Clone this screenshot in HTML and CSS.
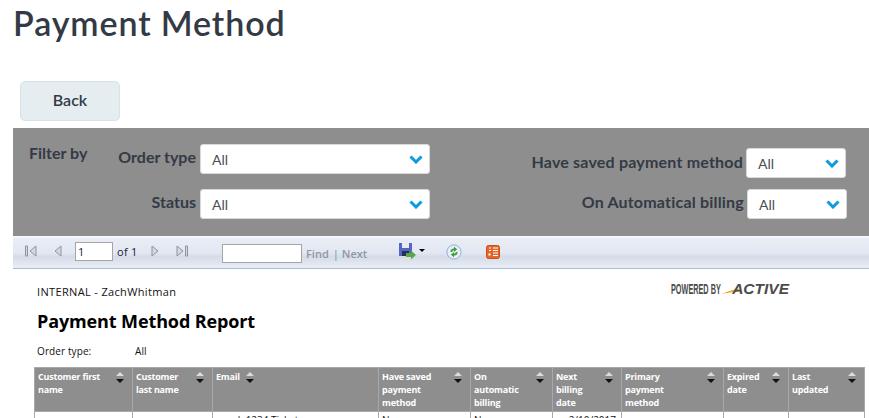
FILE: index.html
```html
<!DOCTYPE html>
<html lang="en">
<head>
<meta charset="utf-8">
<title>Payment Method</title>
<link rel="stylesheet" href="styles.css">
</head>
<body>
<div class="page">
  <h1 class="title">Payment Method</h1>
  <div class="actions"><button class="back">Back</button></div>
  <section class="filters">
    <div class="filter-by">Filter by</div>
    <div class="filter-left">
      <label class="field"><span class="lbl">Order type</span><span class="select wide">All<svg class="chev" viewBox="0 0 14 9"><path d="M1.5 1.5 7 7l5.5-5.5" fill="none" stroke="#0a9be0" stroke-width="3"/></svg></span></label>
      <label class="field"><span class="lbl">Status</span><span class="select wide">All<svg class="chev" viewBox="0 0 14 9"><path d="M1.5 1.5 7 7l5.5-5.5" fill="none" stroke="#0a9be0" stroke-width="3"/></svg></span></label>
    </div>
    <div class="filter-right">
      <label class="field"><span class="lbl">Have saved payment method</span><span class="select narrow">All<svg class="chev" viewBox="0 0 14 9"><path d="M1.5 1.5 7 7l5.5-5.5" fill="none" stroke="#0a9be0" stroke-width="3"/></svg></span></label>
      <label class="field shifted"><span class="lbl">On Automatical billing</span><span class="select narrow">All<svg class="chev" viewBox="0 0 14 9"><path d="M1.5 1.5 7 7l5.5-5.5" fill="none" stroke="#0a9be0" stroke-width="3"/></svg></span></label>
    </div>
  </section>
  <div class="toolbar">
    <div class="pager">
      <svg class="ico" viewBox="0 0 14 14"><path d="M1.500 2h2v10h-2zM12 2v10L6 7z" fill="#d5d9de" stroke="#8f959b"/></svg>
      <svg class="ico gap-a" viewBox="0 0 14 14"><path d="M10 2v10L4 7z" fill="#d5d9de" stroke="#8f959b"/></svg>
      <span class="page-input">1</span>
      <span class="of">of 1</span>
      <svg class="ico gap-b" viewBox="0 0 14 14"><path d="M4 2v10l6-5z" fill="#d5d9de" stroke="#8f959b"/></svg>
      <svg class="ico gap-c" viewBox="0 0 14 14"><path d="M2 2v10l6-5zM10.500 2h2v10h-2z" fill="#d5d9de" stroke="#8f959b"/></svg>
    </div>
    <span class="find-input"></span>
    <span class="find">Find</span><span class="sep">|</span><span class="find">Next</span>
    <svg class="save" viewBox="0 0 18 18"><path d="M1 1h13v13H1z" fill="#5566c0"/><path d="M4 1h7v5H4z" fill="#e8ebf5"/><path d="M4 9h7v5H4z" fill="#2a2f4a"/><path d="M8 11h5V8.500l5 4.500-5 4.500V15H8z" fill="#58a84a"/></svg>
    <span class="caret"></span>
    <svg class="refresh" viewBox="0 0 18 18"><circle cx="9" cy="9" r="8" fill="#e8eef8" stroke="#86a7d6"/><path d="M5 9a4 4 0 0 1 4-4V3l3.500 3L9 9V7a2 2 0 0 0-2 2z" fill="#3f9b3a"/><path d="M13 9a4 4 0 0 1-4 4v2l-3.500-3L9 9v2a2 2 0 0 0 2-2z" fill="#3f9b3a"/></svg>
    <svg class="book" viewBox="0 0 14 14"><rect x=".5" y=".5" width="13" height="13" rx="2" fill="#e2672a" stroke="#c94f17"/><path d="M7 3h5M7 5.500h5M7 8h5M7 10.500h5M3 3h2M3 5.500h2" stroke="#fff"/><rect x="2.500" y="8.500" width="2" height="2" fill="#fff"/></svg>
  </div>
  <section class="report">
    <div class="report-head">
      <div class="internal">INTERNAL - ZachWhitman</div>
      <div class="logo"><span class="powered">POWERED BY</span><svg class="swoosh" viewBox="0 0 22 12"><path d="M0 11C5 8.500 11 6.500 18 5.500L14 9C9 9 4 10 0 11z" fill="#e8a91c"/></svg><span class="active">ACTIVE</span></div>
    </div>
    <h2 class="report-title">Payment Method Report</h2>
    <div class="meta"><span class="meta-key">Order type:</span><span>All</span></div>
    <table class="grid">
      <colgroup>
        <col class="c1"><col class="c2"><col class="c3"><col class="c4"><col class="c5"><col class="c6"><col class="c7"><col class="c8"><col class="c9">
      </colgroup>
      <thead>
        <tr>
          <th><div class="th"><span>Customer first name</span><i class="sort"></i></div></th>
          <th><div class="th"><span>Customer last name</span><i class="sort"></i></div></th>
          <th><div class="th start"><span>Email</span><i class="sort"></i></div></th>
          <th><div class="th"><span>Have saved payment method</span><i class="sort"></i></div></th>
          <th><div class="th"><span>On automatic billing</span><i class="sort"></i></div></th>
          <th><div class="th"><span>Next billing date</span><i class="sort"></i></div></th>
          <th><div class="th"><span>Primary payment method</span><i class="sort"></i></div></th>
          <th><div class="th"><span>Expired date</span><i class="sort"></i></div></th>
          <th><div class="th"><span>Last updated</span><i class="sort"></i></div></th>
        </tr>
      </thead>
      <tbody>
        <tr><td></td><td></td><td class="indent">ck 1234 Ticket</td><td>No</td><td>No</td><td class="right">2/10/2017</td><td></td><td></td><td></td></tr>
      </tbody>
    </table>
  </section>
</div>
</body>
</html>
```
FILE: styles.css
```css
* { box-sizing: border-box; }
html, body { margin: 0; height: 418px; overflow: hidden; background: #fff; }
body { font-family: "Lato", "Open Sans", sans-serif; color: #333a45; }
.page { padding: 0 0 0 13px; }
.title { margin: 0; padding-top: 2px; font-size: 34px; line-height: 41px; font-weight: 600; color: #333a45; height: 81px; letter-spacing: .9px; }
.actions { padding-left: 7px; height: 47px; }
.back { display: block; width: 100px; height: 40px; border: 1px solid #d6e1e8; border-radius: 5px; background: #e6edf1; font: 600 16px "Lato", sans-serif; color: #333a45; padding: 0 0 3px; }
.filters { display: flex; background: #8e8e8e; height: 108px; width: 856px; font-weight: 700; font-size: 16px; }
.filter-by { padding: 15px 0 0 16px; width: 86px; line-height: 20px; }
.filter-left { width: 331px; padding-top: 16px; display: flex; flex-direction: column; gap: 15px; }
.filter-right { flex: 1; padding-top: 20px; display: flex; flex-direction: column; gap: 11px; align-items: flex-end; letter-spacing: .2px; }
.field { display: flex; align-items: center; justify-content: flex-end; gap: 4px; height: 30px; }
.lbl { margin-bottom: 6px; }
.filter-right .lbl { margin-bottom: 4px; }
.filter-right .shifted .lbl { margin-bottom: 6px; }
.filter-right .field { padding-right: 23px; gap: 3px; }
.filter-right .field.shifted { padding-right: 22px; }
.select { display: flex; align-items: center; justify-content: space-between; height: 30px; background: #fff; border: 1px solid #d9d9d9; border-radius: 3px; font-weight: 400; font-size: 14px; letter-spacing: 0; padding: 0 6px 0 11px; color: #4b4f57; }
.select.wide { width: 230px; }
.select.narrow { width: 100px; }
.chev { width: 14px; height: 9px; }
.toolbar { display: flex; align-items: center; height: 33px; width: 856px; border-top: 2px solid #f4f6fb; border-bottom: 1px solid #a9bcdf; background: linear-gradient(#e9edf6 0%, #e2e7f1 50%, #d5dce8 62%, #e9edf4 100%); font-family: "Open Sans", sans-serif; font-size: 11px; padding-left: 11px; color: #333; }
.pager { display: flex; align-items: center; width: 198px; margin-top: -4px; color: #1a1a33; }
.ico { width: 14px; height: 14px; }
.gap-a { margin-left: 13px; }
.page-input { width: 38px; height: 19px; margin-left: 10px; border: 1px solid #a5a5a5; background: #fff; padding-left: 2px; line-height: 17px; font-size: 11px; }
.of { margin-left: 4px; width: 21px; white-space: nowrap; letter-spacing: .3px; }
.gap-b { margin-left: 10px; }
.gap-c { margin-left: 13px; }
.find-input { width: 80px; height: 19px; border: 1px solid #a5a5a5; background: #fff; }
.find { color: #8f97a3; margin-left: 4px; font-weight: 600; }
.sep { color: #5a93cf; margin-left: 4px; margin-right: -1px; }
.save { width: 18px; height: 18px; margin: -4px 0 0 31px; }
.caret { width: 0; height: 0; margin: -6px 0 0 3px; border: 3px solid transparent; border-top: 3px solid #000; border-bottom: 0; }
.refresh { width: 16px; height: 16px; margin: -3px 0 0 21px; }
.book { width: 14px; height: 14px; margin: -3px 0 0 24px; }
.report { padding-left: 21px; font-family: "Open Sans", sans-serif; color: #111; height: 150px; overflow: hidden; }
.report-head { display: flex; justify-content: space-between; height: 39px; padding-left: 3px; }
.internal { padding-top: 15px; font-size: 11px; line-height: 16px; letter-spacing: .35px; }
.logo { display: flex; align-items: center; height: 20px; margin: 10px 80px 0 0; color: #4b4b4b; }
.powered { font-family: "Liberation Sans", sans-serif; font-weight: 700; font-size: 14px; transform: scaleX(.52); transform-origin: left; width: 51px; white-space: nowrap; }
.swoosh { width: 22px; height: 12px; margin-right: -12px; }
.active { font-family: "Liberation Sans", sans-serif; font-style: italic; font-weight: 700; font-size: 15.500px; }
.report-title { margin: 0; padding: 1px 0 0 3px; font-size: 18px; line-height: 24px; font-weight: 700; color: #000; height: 34px; letter-spacing: -.12px; }
.meta { display: flex; padding-left: 3px; font-size: 10px; line-height: 14px; height: 25px; padding-top: 2px; letter-spacing: .1px; }
.meta-key { width: 98px; }
.grid { border-collapse: collapse; table-layout: fixed; width: 830px; font-size: 9px; }
.c1 { width: 98px; } .c2 { width: 80px; } .c3 { width: 166px; } .c4 { width: 92px; } .c5 { width: 82px; } .c6 { width: 69px; } .c7 { width: 102px; } .c8 { width: 65px; } .c9 { width: 76px; }
.grid th { background: #8e8e8e; color: #fff; border: 1px solid #a8a8a8; vertical-align: top; text-align: left; height: 44px; padding: 2px 2px 0 3px; font-weight: 700; line-height: 13px; letter-spacing: -.2px; }
.th { display: flex; justify-content: space-between; padding-right: 6px; }
.th span { padding-right: 10px; }
.th.start { justify-content: flex-start; gap: 6px; }
.th.start span { padding-right: 0; }
.sort { flex: none; width: 8px; height: 13px; position: relative; }
.sort::before, .sort::after { content: ""; position: absolute; left: 0; border-left: 4px solid transparent; border-right: 4px solid transparent; }
.sort::before { top: 2px; border-bottom: 4px solid #dcdcdc; }
.sort::after { top: 9px; border-top: 4px solid #111; }
.grid td { border: 1px solid #a8a8a8; border-top: 0; padding: 1px 5px 0 3px; height: 20px; vertical-align: top; font-size: 10px; line-height: 14px; }
.grid td.right { text-align: right; }
.grid td.indent { padding-left: 20px; }
```
